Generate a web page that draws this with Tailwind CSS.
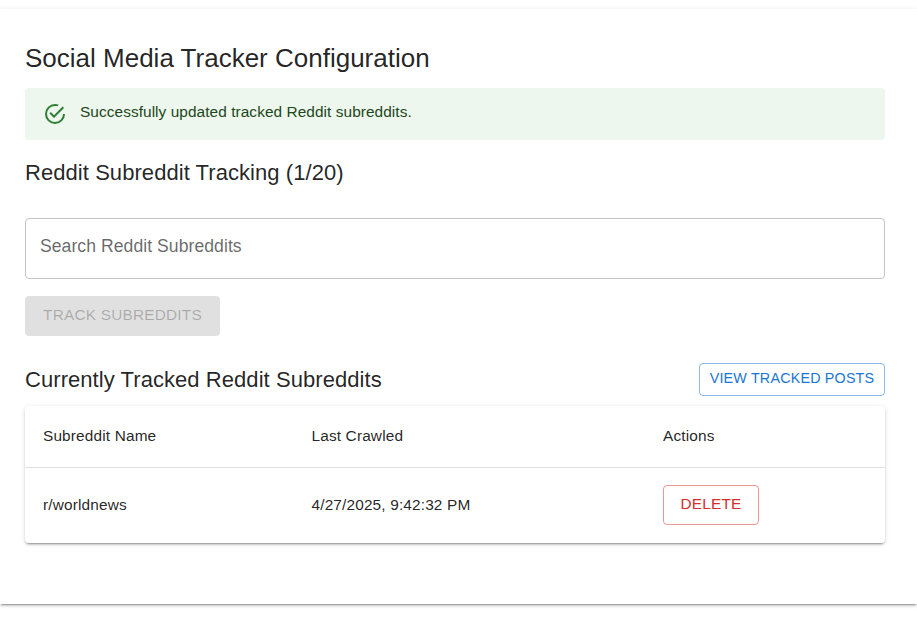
<!DOCTYPE html>
<html>
<head>
<meta charset="utf-8">
<script src="https://cdn.jsdelivr.net/npm/@tailwindcss/browser@4"></script>
</head>
<body class="bg-white font-['Liberation_Sans',Arial,sans-serif] text-[#000000de] h-[617px] overflow-hidden">
<div class="pt-[9px]">
  <div class="bg-white h-[595px] pl-[25px] pr-[32px] pt-[32px] shadow-[0_3px_1px_-2px_rgba(0,0,0,0.2),0_2px_2px_0_rgba(0,0,0,0.14),0_1px_5px_0_rgba(0,0,0,0.12)]">
    <h1 class="text-[26px] leading-[34px] h-[47px] font-normal">Social Media Tracker Configuration</h1>
    <div class="flex bg-[#edf7ed] rounded-[4px] h-[52px] pl-[18px] text-[#1e4620]">
      <svg class="w-[24px] h-[24px] mt-[14px] mr-[13px] shrink-0 fill-[#2e7d32]" viewBox="0 0 24 24"><path d="M20,12A8,8 0 0,1 12,20A8,8 0 0,1 4,12A8,8 0 0,1 12,4C12.76,4 13.5,4.11 14.2, 4.31L15.77,2.74C14.61,2.26 13.34,2 12,2A10,10 0 0,0 2,12A10,10 0 0,0 12,22A10,10 0 0,0 22,12M7.91,10.08L6.5,11.5L11,16L21,6L19.59,4.58L11,13.17L7.91,10.08Z"/></svg>
      <p class="text-[15.4px] leading-[20px] pt-[14px] tracking-[0.07px]">Successfully updated tracked Reddit subreddits.</p>
    </div>
    <h2 class="text-[22px] leading-[32px] mt-[17px] tracking-[0.06px] font-normal">Reddit Subreddit Tracking (1/20)</h2>
    <div class="mt-[29px] h-[61px] border border-[#c4c4c4] rounded-[4px] flex items-center pl-[14px] pb-[5px] text-[17.6px] tracking-[0.05px] text-[#00000099]">Search Reddit Subreddits</div>
    <button class="block mt-[17px] w-[195px] h-[40px] pb-[2px] rounded-[4px] bg-[#e0e0e0] text-[#000000]/25 text-[15.4px] tracking-[0.2px] uppercase font-normal">Track Subreddits</button>
    <div class="flex items-center justify-between mt-[27px] h-[33px]">
      <h2 class="text-[22px] leading-[32px] pb-[5px] h-[32px] tracking-[0.06px] font-normal">Currently Tracked Reddit Subreddits</h2>
      <button class="h-[33px] w-[186px] pb-[2px] rounded-[4px] border border-[#1976d2]/50 text-[#1976d2] text-[14.3px] tracking-[0.2px] uppercase">View Tracked Posts</button>
    </div>
    <div class="mt-[10px] bg-white rounded-[4px] shadow-[0_3px_1px_-2px_rgba(0,0,0,0.2),0_2px_2px_0_rgba(0,0,0,0.14),0_1px_5px_0_rgba(0,0,0,0.12)] text-[15.4px] tracking-[0.15px]">
      <div class="grid grid-cols-[268.5px_351.5px_1fr] pl-[18px] h-[62px] items-center border-b border-[#e0e0e0] pb-[2px]">
        <div>Subreddit Name</div><div>Last Crawled</div><div>Actions</div>
      </div>
      <div class="grid grid-cols-[268.5px_351.5px_1fr] pl-[18px] h-[75px] items-center">
        <div class="pb-[2px]">r/worldnews</div><div class="pb-[2px]">4/27/2025, 9:42:32 PM</div>
        <div class="pb-[2px]"><button class="w-[96px] h-[40px] pb-[2px] rounded-[4px] border border-[#d32f2f]/50 text-[#d32f2f] text-[15.4px] tracking-[0.2px] uppercase">Delete</button></div>
      </div>
    </div>
  </div>
</div>
</body>
</html>
